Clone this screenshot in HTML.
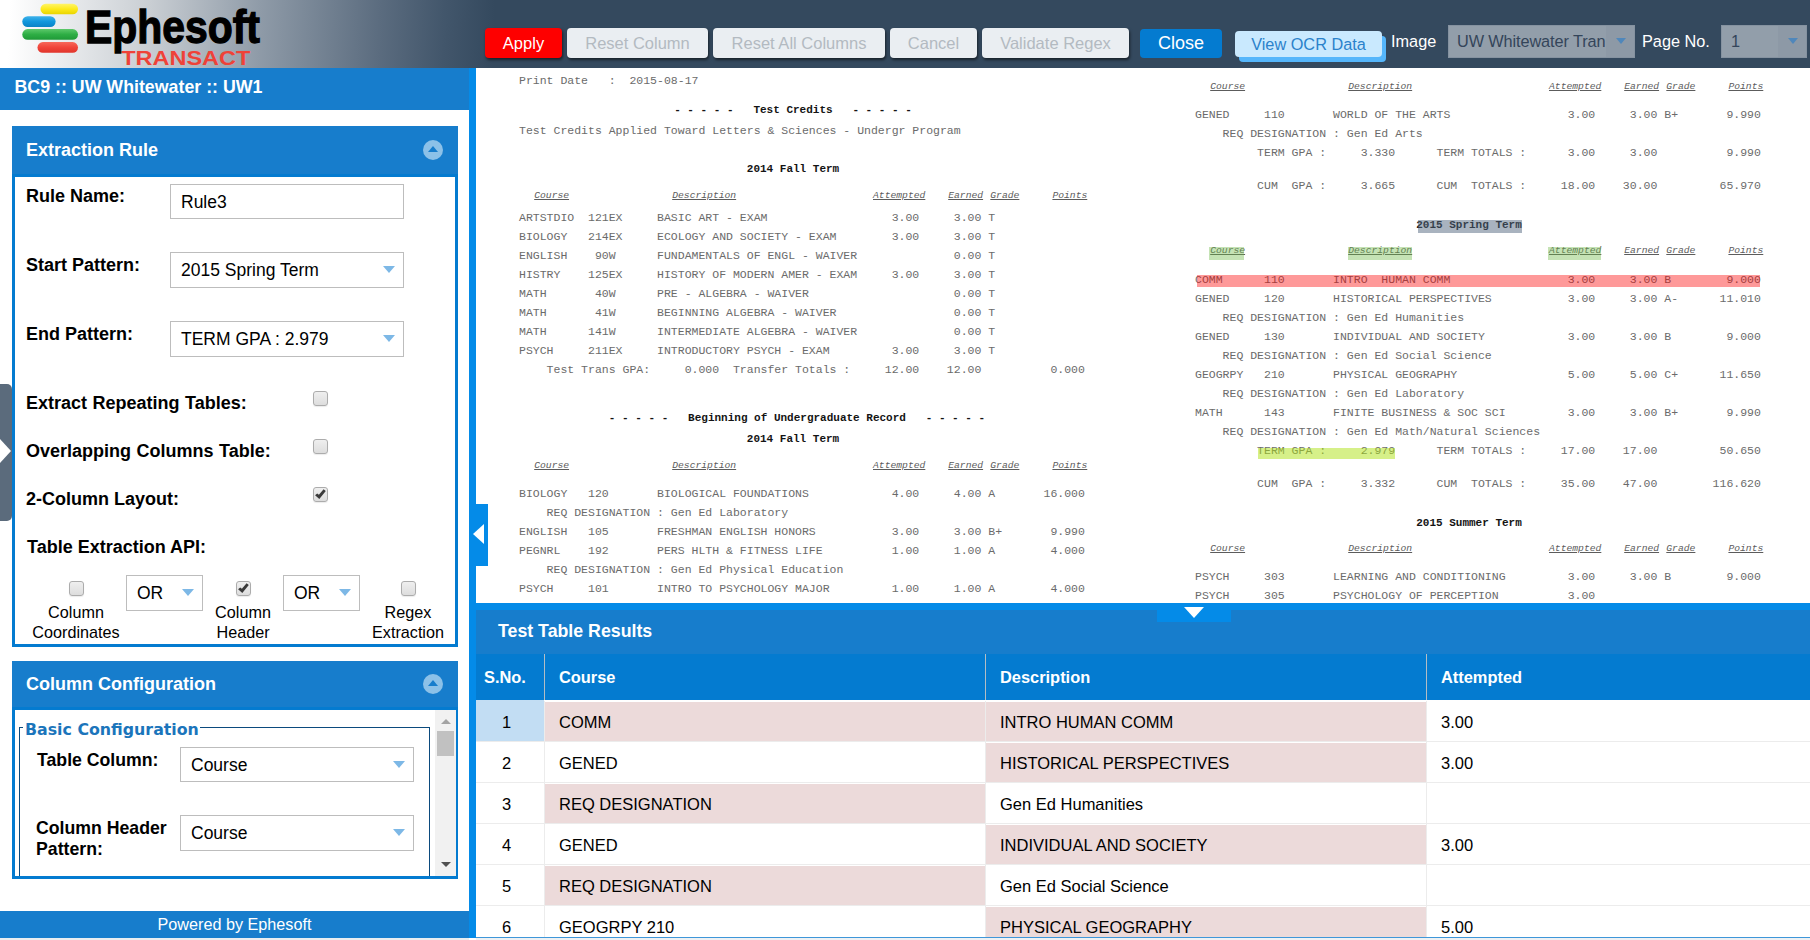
<!DOCTYPE html>
<html lang="en">
<head>
<meta charset="utf-8">
<title>Ephesoft Transact - Table Extraction</title>
<style>
*{box-sizing:border-box;margin:0;padding:0}
html,body{width:1810px;height:940px;overflow:hidden;background:#fff;font-family:"Liberation Sans",sans-serif;color:#000}
.abs{position:absolute}
#hdr{position:absolute;left:0;top:0;width:1810px;height:68px;background:linear-gradient(92deg,#ffffff 0px,#ffffff 10px,#c9ced3 150px,#8f9ba8 260px,#5b6c7f 380px,#42566b 445px,#34495e 495px,#34495e 100%)}
/* ---------- toolbar buttons ---------- */
.btn{position:absolute;top:28px;height:30px;border-radius:4px;font-size:16.5px;line-height:31px;text-align:center;background:#eaeef2;color:#b3bac1;box-shadow:1px 2px 3px rgba(0,0,0,.55);white-space:nowrap}
.btn.red{background:#fe0000;color:#fff}
.btn.blue{background:#047bd0;color:#fff;box-shadow:none}
.tlabel{position:absolute;color:#fff;font-size:16.3px;line-height:20px;white-space:nowrap}
.tsel{position:absolute;background:#929eaa;border:1px solid #8592a0;color:#34455a;font-size:16.3px;letter-spacing:-.1px;line-height:31px;padding-left:8px;white-space:nowrap;overflow:hidden}
.tsel i{position:absolute;right:0;top:0;width:28px;height:100%;background:#8d99a6}
.tsel i:after{content:"";position:absolute;left:10px;top:12px;border:5.5px solid transparent;border-top:6px solid #4f87bb;border-bottom:0}
/* ---------- left panel ---------- */
#left{position:absolute;left:0;top:68px;width:469px;height:872px;background:#fff}
#ltitle{position:absolute;left:0;top:0;width:469px;height:42px;background:#177dcc;color:#fff;font-weight:bold;font-size:17.8px;line-height:22px;padding:8px 0 0 14.5px;white-space:nowrap}
#split{position:absolute;left:469px;top:68px;width:7px;height:869.5px;background:#048be8}
.panel{position:absolute;left:12px;width:446px}
.phead{position:absolute;left:0;top:0;width:446px;background:#177dcc;color:#fff;font-weight:bold;font-size:18px;white-space:nowrap}
.phead span{position:absolute;left:14px}
.pbody{position:absolute;left:0;width:446px;border:3px solid #047bd0;border-top-width:3px;background:#fff}
.circ{position:absolute;left:411px;width:20px;height:20px;border-radius:50%;background:#8cc1e8}
.circ:after{content:"";position:absolute;left:5px;top:6px;border:5px solid transparent;border-bottom:6px solid #177dcc;border-top:0}
.lbl{position:absolute;font-weight:bold;font-size:18px;line-height:21px;white-space:nowrap}
.inp{position:absolute;height:34px;border:1px solid #bdbdbd;background:#fff;font-size:17.5px;line-height:34px;padding-left:10px;white-space:nowrap}
.inp.dd:after{content:"";position:absolute;right:8px;top:13px;border:6px solid transparent;border-top:7px solid #7db8e6;border-bottom:0}
.cb{position:absolute;width:15px;height:15px;border:1px solid #acacac;border-radius:3px;background:linear-gradient(#efefef,#dddddd);box-shadow:0 1px 1px rgba(0,0,0,.08)}
.cb.on svg{position:absolute;left:-1px;top:-1px}
.os{font-family:"Liberation Sans","DejaVu Sans",sans-serif}

/* ---------- document image ---------- */
#doc{position:absolute;left:476px;top:68px;width:1334px;height:535px;background:#fff;overflow:hidden;font-family:"Liberation Mono","DejaVu Sans Mono",monospace}
.dl{position:absolute;white-space:pre;font-size:11.5px;line-height:14px;color:#6b6b6b}
.dh{font-style:italic;font-size:9.7px;text-decoration:underline;color:#5c5c5c}
.db{font-weight:bold;font-size:11px;text-align:center;color:#141414}
.hl{position:absolute;display:block}
/* ---------- results ---------- */
#hsplit{position:absolute;left:476px;top:603px;width:1334px;height:7px;background:#048be8}
#rhead{position:absolute;left:476px;top:610px;width:1334px;height:44px;background:#177dcc;color:#fff;font-weight:bold;font-size:17.75px;line-height:22px;padding:10px 0 0 22px}
#thead{position:absolute;left:476px;top:654px;width:1334px;height:46px;background:#047bd0;color:#fff;font-weight:bold;font-size:16.4px}
#thead span{position:absolute;top:0;line-height:46px;white-space:nowrap}
#thead i{position:absolute;top:0;width:1px;height:46px;background:#b4bdc4}
#tbody{position:absolute;left:476px;top:700px;width:1334px;height:237px;overflow:hidden;background:#fff;font-size:16.5px}
.tr{position:absolute;left:0;width:1334px;height:41px;border-bottom:1px solid #ececec}
.tr span{position:absolute;top:1px;height:39px;line-height:41px;white-space:nowrap;padding-left:14px}
.tr span.n{left:0;width:68px;padding:0;text-align:center;top:-1px;height:41px;line-height:45px;padding-right:7px}
.tr span.c1{left:69px;width:440px}
.tr span.c2{left:510px;width:440px}
.tr span.c3{left:951px;width:383px}
.tr span.pk{background:#ecdada}
.tr i{position:absolute;top:0;width:1px;height:41px;background:#ececec}
</style>
</head>
<body>
<div id="hdr"></div>
<svg class="abs" style="left:0;top:0" width="300" height="68" viewBox="0 0 300 68">
<defs>
<linearGradient id="gy" x1="0" y1="0" x2="0" y2="1"><stop offset="0" stop-color="#fff46a"/><stop offset=".5" stop-color="#fdea1c"/><stop offset="1" stop-color="#e9d400"/></linearGradient>
<linearGradient id="gb" x1="0" y1="0" x2="0" y2="1"><stop offset="0" stop-color="#3fb2ea"/><stop offset=".5" stop-color="#1197dd"/><stop offset="1" stop-color="#0a82c6"/></linearGradient>
<linearGradient id="gg" x1="0" y1="0" x2="0" y2="1"><stop offset="0" stop-color="#5cc86a"/><stop offset=".5" stop-color="#2eae45"/><stop offset="1" stop-color="#1f9a37"/></linearGradient>
<linearGradient id="gr" x1="0" y1="0" x2="0" y2="1"><stop offset="0" stop-color="#f7675a"/><stop offset=".5" stop-color="#f0443a"/><stop offset="1" stop-color="#e0352c"/></linearGradient>
</defs>
<rect x="40.5" y="3.7" width="37.5" height="10.6" rx="5.3" fill="url(#gy)"/>
<rect x="22.3" y="16.2" width="33.3" height="10.8" rx="5.4" fill="url(#gb)"/>
<rect x="22.3" y="29.1" width="55.7" height="10.6" rx="5.3" fill="url(#gg)"/>
<rect x="37.5" y="42.1" width="40.5" height="10.6" rx="5.3" fill="url(#gr)"/>
<text x="85" y="43.3" font-family="Liberation Sans, sans-serif" font-weight="bold" font-size="47" fill="#000" stroke="#000" stroke-width="1.3" textLength="175" lengthAdjust="spacingAndGlyphs">Ephesoft</text>
<text x="121.3" y="64.5" font-family="Liberation Sans, sans-serif" font-weight="bold" font-size="21" fill="#ef4238" textLength="129" lengthAdjust="spacingAndGlyphs">TRANSACT</text>
</svg>
<div class="btn red" style="left:485px;width:77px">Apply</div>
<div class="btn" style="left:567px;width:141px">Reset Column</div>
<div class="btn" style="left:713px;width:172px">Reset All Columns</div>
<div class="btn" style="left:890px;width:87px">Cancel</div>
<div class="btn" style="left:982px;width:147px">Validate Regex</div>
<div class="btn blue" style="left:1140px;width:82px;top:29px;height:29px;line-height:29px;font-size:18px">Close</div>
<div class="btn" style="left:1235px;width:147px;top:31px;height:26px;line-height:27px;font-size:16.3px;background:#c9e9fe;color:#2b82cb;box-shadow:4px 5px 0 #55b6fb;border-radius:4px">View OCR Data</div>
<div class="tlabel" style="left:1391px;top:31px">Image</div>
<div class="tsel" style="left:1448px;top:25px;width:187px;height:33px">UW Whitewater Tran<i></i></div>
<div class="tlabel" style="left:1642px;top:31px">Page No.</div>
<div class="tsel" style="left:1721px;top:25px;width:86px;height:33px;padding-left:9px">1<i></i></div>
<div id="left">
<div id="ltitle">BC9 :: UW Whitewater :: UW1</div>
<div class="panel" style="top:58px;height:521px">
<div class="phead" style="height:51px"><span style="top:13px;line-height:22px">Extraction Rule</span><div class="circ" style="top:14px"></div></div>
<div class="pbody" style="top:48px;height:473px"></div>
<div class="lbl" style="left:14px;top:60px">Rule Name:</div>
<div class="inp" style="left:158px;top:58px;width:234px;height:35px">Rule3</div>
<div class="lbl" style="left:14px;top:129px">Start Pattern:</div>
<div class="inp dd" style="left:158px;top:126px;width:234px;height:36px">2015 Spring Term</div>
<div class="lbl" style="left:14px;top:198px">End Pattern:</div>
<div class="inp dd" style="left:158px;top:195px;width:234px;height:36px">TERM GPA : 2.979</div>
<div class="lbl" style="left:14px;top:267px;word-spacing:.5px">Extract Repeating Tables:</div>
<div class="cb" style="left:301px;top:265px"></div>
<div class="lbl" style="left:14px;top:315px;word-spacing:.5px">Overlapping Columns Table:</div>
<div class="cb" style="left:301px;top:313px"></div>
<div class="lbl" style="left:14px;top:363px">2-Column Layout:</div>
<div class="cb on" style="left:301px;top:361px"><svg width="15" height="15" viewBox="0 0 15 15"><path d="M2.1 8.3 L4.2 6.4 L5.9 7.8 L10.6 2.2 L12.8 4.1 L6.3 11.9 Z" fill="#3a3a3a"/></svg></div>
<div class="lbl" style="left:15px;top:411px">Table Extraction API:</div>
<div class="cb" style="left:57px;top:455px"></div>
<div class="inp dd" style="left:114px;top:449px;width:77px;height:36px;padding-left:10px">OR</div>
<div class="cb on" style="left:224px;top:455px"><svg width="15" height="15" viewBox="0 0 15 15"><path d="M2.1 8.3 L4.2 6.4 L5.9 7.8 L10.6 2.2 L12.8 4.1 L6.3 11.9 Z" fill="#3a3a3a"/></svg></div>
<div class="inp dd" style="left:271px;top:449px;width:77px;height:36px;padding-left:10px">OR</div>
<div class="cb" style="left:389px;top:455px"></div>
<div class="abs os" style="left:14px;top:477px;width:100px;text-align:center;font-size:16.2px;line-height:19.6px">Column<br>Coordinates</div>
<div class="abs os" style="left:181px;top:477px;width:100px;text-align:center;font-size:16.2px;line-height:19.6px">Column<br>Header</div>
<div class="abs os" style="left:346px;top:477px;width:100px;text-align:center;font-size:16.2px;line-height:19.6px">Regex<br>Extraction</div>
</div>
<div class="panel" style="top:593px;height:218px">
<div class="phead" style="height:49px"><span style="top:12px;line-height:22px">Column Configuration</span><div class="circ" style="top:13px"></div></div>
<div class="pbody" style="top:46px;height:172px;overflow:hidden">
<div class="abs" style="left:4px;top:17px;width:411px;height:180px;border:1px solid #0b4a7d"></div>
<div class="abs" style="left:8px;top:9px;padding:0 1px 0 2px;background:#fff;color:#1b75bb;font-weight:bold;font-size:15.8px;line-height:22px;font-family:'DejaVu Sans','Liberation Sans',sans-serif;white-space:nowrap">Basic Configuration</div>
<div class="lbl" style="left:22px;top:40px;font-size:17.7px">Table Column:</div>
<div class="inp dd" style="left:165px;top:37px;width:234px;height:35px">Course</div>
<div class="lbl" style="left:21px;top:108px;font-size:17.7px">Column Header<br>Pattern:</div>
<div class="inp dd" style="left:165px;top:105px;width:234px;height:36px">Course</div>
</div>
<div class="abs" style="left:423px;top:49px;width:21px;height:166px;background:#f1f1f1">
<div class="abs" style="left:2px;top:21px;width:17px;height:25px;background:#c1c1c1"></div>
<div class="abs" style="left:5.5px;top:9px;border:5px solid transparent;border-bottom:5px solid #a3a3a3;border-top:0"></div>
<div class="abs" style="left:5.5px;top:152px;border:5px solid transparent;border-top:5.5px solid #505050;border-bottom:0"></div>
</div>
</div>
<div class="abs os" style="left:0;top:843px;width:469px;height:26.5px;background:#177dcc;color:#fff;font-size:16.2px;line-height:27px;text-align:center">Powered by Ephesoft</div>
<div class="abs" style="left:0;top:869.5px;width:469px;height:3px;background:#e9edf0"></div>
<div class="abs" style="left:0;top:316px;width:11.5px;height:137px;background:#5b6b7c;border-radius:0 5px 5px 0"></div>
<div class="abs" style="left:0;top:371px;border:12px solid transparent;border-left:11px solid #fff;border-right:0"></div>
</div>
<div id="split"></div>
<div id="doc">
<span class="dl" style="left:43px;top:6px">Print Date   :  2015-08-17</span>
<span class="dl db" style="left:117px;width:400px;top:35px">- - - - -   Test Credits   - - - - -</span>
<span class="dl" style="left:43px;top:56px">Test Credits Applied Toward Letters &amp; Sciences - Undergr Program</span>
<span class="dl db" style="left:117px;width:400px;top:94px">2014 Fall Term</span>
<span class="dl dh" style="left:58.2px;top:121px">Course</span>
<span class="dl dh" style="left:196.2px;top:121px">Description</span>
<span class="dl dh" style="left:397.0px;top:121px">Attempted</span>
<span class="dl dh" style="left:472.2px;top:121px">Earned</span>
<span class="dl dh" style="left:514.3px;top:121px">Grade</span>
<span class="dl dh" style="left:576.4px;top:121px">Points</span>
<span class="dl" style="left:43px;top:143px">ARTSTDIO  121EX     BASIC ART - EXAM                  3.00     3.00 T</span>
<span class="dl" style="left:43px;top:162px">BIOLOGY   214EX     ECOLOGY AND SOCIETY - EXAM        3.00     3.00 T</span>
<span class="dl" style="left:43px;top:181px">ENGLISH    90W      FUNDAMENTALS OF ENGL - WAIVER              0.00 T</span>
<span class="dl" style="left:43px;top:200px">HISTRY    125EX     HISTORY OF MODERN AMER - EXAM     3.00     3.00 T</span>
<span class="dl" style="left:43px;top:219px">MATH       40W      PRE - ALGEBRA - WAIVER                     0.00 T</span>
<span class="dl" style="left:43px;top:238px">MATH       41W      BEGINNING ALGEBRA - WAIVER                 0.00 T</span>
<span class="dl" style="left:43px;top:257px">MATH      141W      INTERMEDIATE ALGEBRA - WAIVER              0.00 T</span>
<span class="dl" style="left:43px;top:276px">PSYCH     211EX     INTRODUCTORY PSYCH - EXAM         3.00     3.00 T</span>
<span class="dl" style="left:43px;top:295px">    Test Trans GPA:     0.000  Transfer Totals :     12.00    12.00          0.000</span>
<span class="dl db" style="left:121px;width:400px;top:343px">- - - - -   Beginning of Undergraduate Record   - - - - -</span>
<span class="dl db" style="left:117px;width:400px;top:364px">2014 Fall Term</span>
<span class="dl dh" style="left:58.2px;top:391px">Course</span>
<span class="dl dh" style="left:196.2px;top:391px">Description</span>
<span class="dl dh" style="left:397.0px;top:391px">Attempted</span>
<span class="dl dh" style="left:472.2px;top:391px">Earned</span>
<span class="dl dh" style="left:514.3px;top:391px">Grade</span>
<span class="dl dh" style="left:576.4px;top:391px">Points</span>
<span class="dl" style="left:43px;top:419px">BIOLOGY   120       BIOLOGICAL FOUNDATIONS            4.00     4.00 A       16.000</span>
<span class="dl" style="left:43px;top:438px">    REQ DESIGNATION : Gen Ed Laboratory</span>
<span class="dl" style="left:43px;top:457px">ENGLISH   105       FRESHMAN ENGLISH HONORS           3.00     3.00 B+       9.990</span>
<span class="dl" style="left:43px;top:476px">PEGNRL    192       PERS HLTH &amp; FITNESS LIFE          1.00     1.00 A        4.000</span>
<span class="dl" style="left:43px;top:495px">    REQ DESIGNATION : Gen Ed Physical Education</span>
<span class="dl" style="left:43px;top:514px">PSYCH     101       INTRO TO PSYCHOLOGY MAJOR         1.00     1.00 A        4.000</span>
<span class="dl dh" style="left:734.2px;top:12px">Course</span>
<span class="dl dh" style="left:872.2px;top:12px">Description</span>
<span class="dl dh" style="left:1073.0px;top:12px">Attempted</span>
<span class="dl dh" style="left:1148.2px;top:12px">Earned</span>
<span class="dl dh" style="left:1190.3px;top:12px">Grade</span>
<span class="dl dh" style="left:1252.4px;top:12px">Points</span>
<span class="dl" style="left:719px;top:40px">GENED     110       WORLD OF THE ARTS                 3.00     3.00 B+       9.990</span>
<span class="dl" style="left:719px;top:59px">    REQ DESIGNATION : Gen Ed Arts</span>
<span class="dl" style="left:719px;top:78px">         TERM GPA :     3.330      TERM TOTALS :      3.00     3.00          9.990</span>
<span class="dl" style="left:719px;top:111px">         CUM  GPA :     3.665      CUM  TOTALS :     18.00    30.00         65.970</span>
<span class="dl db" style="left:793px;width:400px;top:150px">2015 Spring Term</span>
<span class="dl dh" style="left:734.2px;top:176px">Course</span>
<span class="dl dh" style="left:872.2px;top:176px">Description</span>
<span class="dl dh" style="left:1073.0px;top:176px">Attempted</span>
<span class="dl dh" style="left:1148.2px;top:176px">Earned</span>
<span class="dl dh" style="left:1190.3px;top:176px">Grade</span>
<span class="dl dh" style="left:1252.4px;top:176px">Points</span>
<span class="dl" style="left:719px;top:205px">COMM      110       INTRO  HUMAN COMM                 3.00     3.00 B        9.000</span>
<span class="dl" style="left:719px;top:224px">GENED     120       HISTORICAL PERSPECTIVES           3.00     3.00 A-      11.010</span>
<span class="dl" style="left:719px;top:243px">    REQ DESIGNATION : Gen Ed Humanities</span>
<span class="dl" style="left:719px;top:262px">GENED     130       INDIVIDUAL AND SOCIETY            3.00     3.00 B        9.000</span>
<span class="dl" style="left:719px;top:281px">    REQ DESIGNATION : Gen Ed Social Science</span>
<span class="dl" style="left:719px;top:300px">GEOGRPY   210       PHYSICAL GEOGRAPHY                5.00     5.00 C+      11.650</span>
<span class="dl" style="left:719px;top:319px">    REQ DESIGNATION : Gen Ed Laboratory</span>
<span class="dl" style="left:719px;top:338px">MATH      143       FINITE BUSINESS &amp; SOC SCI         3.00     3.00 B+       9.990</span>
<span class="dl" style="left:719px;top:357px">    REQ DESIGNATION : Gen Ed Math/Natural Sciences</span>
<span class="dl" style="left:719px;top:376px">         TERM GPA :     2.979      TERM TOTALS :     17.00    17.00         50.650</span>
<span class="dl" style="left:719px;top:409px">         CUM  GPA :     3.332      CUM  TOTALS :     35.00    47.00        116.620</span>
<span class="dl db" style="left:793px;width:400px;top:448px">2015 Summer Term</span>
<span class="dl dh" style="left:734.2px;top:474px">Course</span>
<span class="dl dh" style="left:872.2px;top:474px">Description</span>
<span class="dl dh" style="left:1073.0px;top:474px">Attempted</span>
<span class="dl dh" style="left:1148.2px;top:474px">Earned</span>
<span class="dl dh" style="left:1190.3px;top:474px">Grade</span>
<span class="dl dh" style="left:1252.4px;top:474px">Points</span>
<span class="dl" style="left:719px;top:502px">PSYCH     303       LEARNING AND CONDITIONING         3.00     3.00 B        9.000</span>
<span class="dl" style="left:719px;top:521px">PSYCH     305       PSYCHOLOGY OF PERCEPTION          3.00</span>
<i class="hl" style="left:942px;top:152px;width:104px;height:13px;background:rgba(83,103,127,.5)"></i>
<i class="hl" style="left:733px;top:179px;width:35px;height:13px;background:rgba(110,185,70,.4)"></i>
<i class="hl" style="left:872px;top:179px;width:64px;height:13px;background:rgba(110,185,70,.4)"></i>
<i class="hl" style="left:1072px;top:179px;width:53px;height:13px;background:rgba(110,185,70,.4)"></i>
<i class="hl" style="left:721px;top:207px;width:563px;height:12px;background:rgba(253,0,0,.4)"></i>
<i class="hl" style="left:782px;top:380px;width:137px;height:11px;background:rgba(173,225,19,.5)"></i>
</div>
<div id="rhead">Test Table Results</div>
<div id="hsplit"></div>
<div class="abs" style="left:1157px;top:603px;width:74px;height:19px;background:#048be8"></div>
<div class="abs" style="left:1184px;top:607px;border:10px solid transparent;border-top:11px solid #fff;border-bottom:0"></div>
<div class="abs" style="left:476px;top:504px;width:12px;height:62px;background:#048be8"></div>
<div class="abs" style="left:473px;top:524px;border:10px solid transparent;border-right:11.5px solid #fff;border-left:0"></div>
<div id="thead"><span style="left:8px">S.No.</span><i style="left:68px"></i><span style="left:83px">Course</span><i style="left:509px"></i><span style="left:524px">Description</span><i style="left:950px"></i><span style="left:965px">Attempted</span></div>
<div id="tbody">
<div class="tr" style="top:1px"><span class="n" style="background:#c2ddf3">1</span><i style="left:68px"></i><span class="c1 pk">COMM</span><i style="left:509px"></i><span class="c2 pk">INTRO HUMAN COMM</span><i style="left:950px"></i><span class="c3">3.00</span></div>
<div class="tr" style="top:42px"><span class="n">2</span><i style="left:68px"></i><span class="c1">GENED</span><i style="left:509px"></i><span class="c2 pk">HISTORICAL PERSPECTIVES</span><i style="left:950px"></i><span class="c3">3.00</span></div>
<div class="tr" style="top:83px"><span class="n">3</span><i style="left:68px"></i><span class="c1 pk">REQ DESIGNATION</span><i style="left:509px"></i><span class="c2">Gen Ed Humanities</span><i style="left:950px"></i><span class="c3"></span></div>
<div class="tr" style="top:124px"><span class="n">4</span><i style="left:68px"></i><span class="c1">GENED</span><i style="left:509px"></i><span class="c2 pk">INDIVIDUAL AND SOCIETY</span><i style="left:950px"></i><span class="c3">3.00</span></div>
<div class="tr" style="top:165px"><span class="n">5</span><i style="left:68px"></i><span class="c1 pk">REQ DESIGNATION</span><i style="left:509px"></i><span class="c2">Gen Ed Social Science</span><i style="left:950px"></i><span class="c3"></span></div>
<div class="tr" style="top:206px"><span class="n">6</span><i style="left:68px"></i><span class="c1">GEOGRPY 210</span><i style="left:509px"></i><span class="c2 pk">PHYSICAL GEOGRAPHY</span><i style="left:950px"></i><span class="c3">5.00</span></div>
</div>
<div class="abs" style="left:476px;top:937px;width:1334px;height:1px;background:#3f97d9"></div><div class="abs" style="left:476px;top:938px;width:1334px;height:2px;background:#eef1f4"></div>
</body>
</html>
